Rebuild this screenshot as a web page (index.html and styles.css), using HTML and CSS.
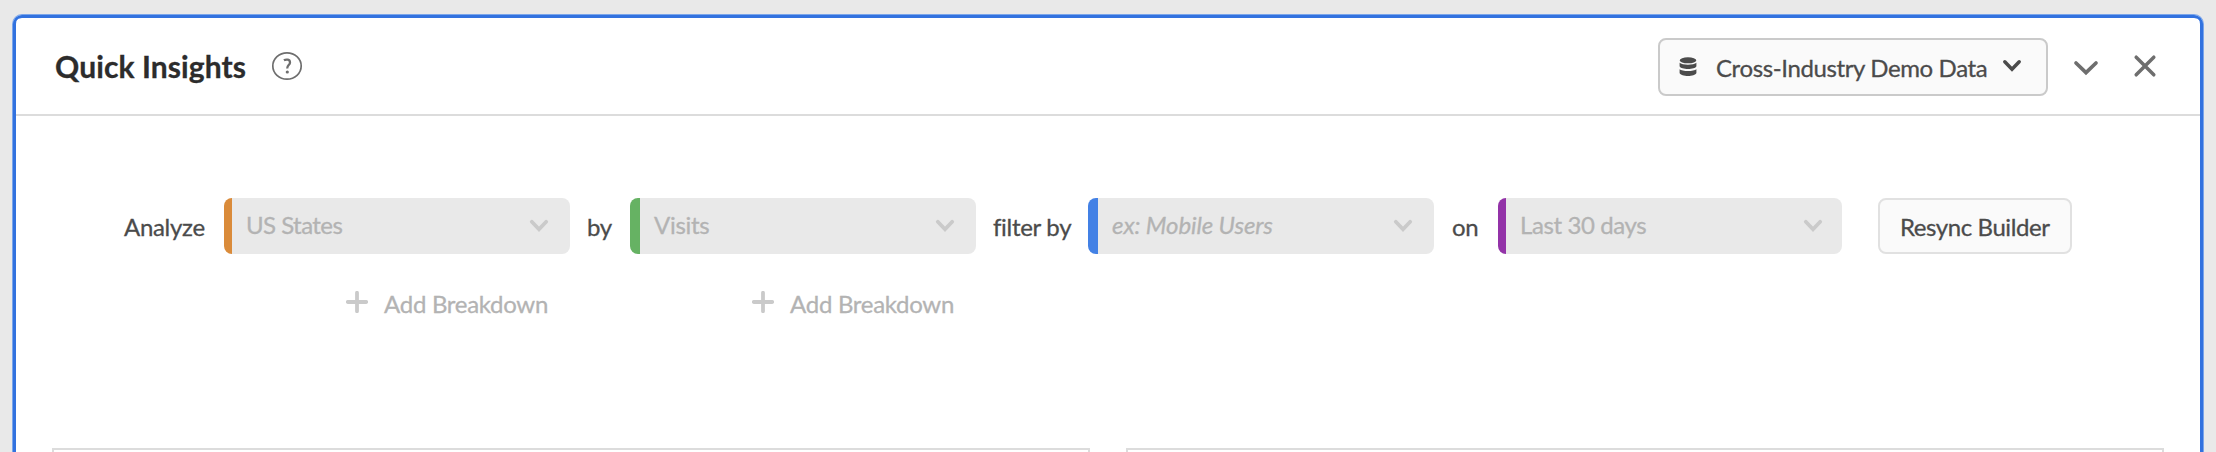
FILE: index.html
```html
<!DOCTYPE html>
<html lang="en">
<head>
<meta charset="utf-8">
<title>Quick Insights</title>
<link rel="stylesheet" href="styles.css">
</head>
<body>
<main class="panel">
  <header class="header">
    <h1 class="title">Quick Insights</h1>
    <svg class="help" width="32" height="30" viewBox="0 0 32 30"><ellipse cx="16" cy="15" rx="14.2" ry="13.2" fill="none" stroke="#6e6e6e" stroke-width="1.7"/><path d="M12.9 9.3C15.3 8 19 8.4 19 11.4C19 14 16.2 14.3 16.2 17.4" fill="none" stroke="#6e6e6e" stroke-width="2.3"/><circle cx="16.3" cy="21" r="1.6" fill="#6e6e6e"/></svg>
    <button class="dataset">
      <svg class="db" width="18" height="20" viewBox="0 0 18 20" fill="#4b4b4b"><ellipse cx="9" cy="3.3" rx="8.3" ry="3"/><path d="M.6 5.7C3 8.3 15 8.3 17.4 5.7V9.2C16 12.8 2 12.8.6 9.2Z"/><path d="M.6 12.3C3 14.7 15 14.7 17.4 12.3V16C16 20 2 20 .6 16Z"/></svg>
      <span class="dataset-name">Cross-Industry Demo Data</span>
      <svg width="20" height="14" viewBox="0 0 20 14"><path d="M2.8 2.8L10 10.2L17.2 2.8" fill="none" stroke="#4b4b4b" stroke-width="3.5" stroke-linecap="round"/></svg>
    </button>
    <svg class="collapse" width="26" height="16" viewBox="0 0 26 16"><path d="M3 3L13 12.6L23 3" fill="none" stroke="#6e6e6e" stroke-width="3.7" stroke-linecap="round"/></svg>
    <svg class="close" width="24" height="24" viewBox="0 0 24 24"><path d="M3.2 3.2L20.8 20.8M20.8 3.2L3.2 20.8" fill="none" stroke="#6e6e6e" stroke-width="3.5" stroke-linecap="round"/></svg>
  </header>
  <section class="builder">
    <span class="label label-analyze">Analyze</span>
    <div class="group">
      <div class="field orange"><span class="value">US States</span><svg class="chevron" width="20" height="14" viewBox="0 0 20 14"><path d="M2.8 2.8L10 10.2L17.2 2.8"/></svg></div>
      <div class="add"><svg width="22" height="22" viewBox="0 0 22 22"><path d="M11 1.8V20.2M1.8 11H20.2"/></svg><span>Add Breakdown</span></div>
    </div>
    <span class="label label-by">by</span>
    <div class="group">
      <div class="field green"><span class="value">Visits</span><svg class="chevron" width="20" height="14" viewBox="0 0 20 14"><path d="M2.8 2.8L10 10.2L17.2 2.8"/></svg></div>
      <div class="add"><svg width="22" height="22" viewBox="0 0 22 22"><path d="M11 1.8V20.2M1.8 11H20.2"/></svg><span>Add Breakdown</span></div>
    </div>
    <span class="label label-filter">filter by</span>
    <div class="field blue"><span class="value placeholder">ex: Mobile Users</span><svg class="chevron" width="20" height="14" viewBox="0 0 20 14"><path d="M2.8 2.8L10 10.2L17.2 2.8"/></svg></div>
    <span class="label label-on">on</span>
    <div class="field purple"><span class="value">Last 30 days</span><svg class="chevron" width="20" height="14" viewBox="0 0 20 14"><path d="M2.8 2.8L10 10.2L17.2 2.8"/></svg></div>
    <button class="resync">Resync Builder</button>
  </section>
  <section class="results">
    <div class="card"></div>
    <div class="card"></div>
  </section>
</main>
</body>
</html>
```
FILE: styles.css
```css
* { box-sizing: border-box; }
body {
  margin: 0;
  height: 452px;
  padding: 14px 12px 0;
  overflow: hidden;
  background: #e9e9e9;
  color: #4b4b4b;
  font: 24px/32px Lato, "Open Sans", sans-serif;
  letter-spacing: -0.3px;
  -webkit-text-stroke: 0.3px;
}
svg { display: block; flex: none; }
button {
  display: flex;
  align-items: center;
  background: #fafafa;
  color: inherit;
  font: inherit;
  letter-spacing: inherit;
  white-space: nowrap;
}
.panel {
  height: 438px;
  overflow: hidden;
  background: #fff;
  border: 1px solid #7aa5ea;
  border-bottom: 0;
  border-radius: 10px 10px 0 0;
  box-shadow: inset 0 3px #3272df, inset 3px 0 #3272df, inset -3px 0 #3272df;
  padding: 3px 3px 0;
}
.header {
  display: flex;
  align-items: center;
  height: 98px;
  padding-left: 39px;
  border-bottom: 2px solid #dcdcdc;
}
.title {
  width: 216px;
  margin: 0;
  color: #2c2c2c;
  font-size: 30px;
  line-height: 36px;
  font-weight: 700;
  letter-spacing: 0.1px;
  white-space: nowrap;
}
.dataset {
  width: 390px;
  height: 58px;
  margin-left: auto;
  padding: 2px 0 0 19px;
  border: 2px solid #cacaca;
  border-radius: 8px;
}
.db { margin: -2px 19px 0 0; }
.dataset-name { width: 286px; letter-spacing: -0.38px; text-align: left; }
.dataset svg:last-child { margin-top: -4px; }
.dataset, .help { position: relative; top: 1px; }
.help { top: 0; }
.collapse { margin: 3px 0 0 25px; }
.close { margin: 0 43px 0 34px; }
.builder {
  display: flex;
  align-items: flex-start;
  height: 332px;
  padding: 82px 0 0 108px;
}
.label { padding-top: 13px; height: 56px; white-space: nowrap; }
.label-analyze { width: 100px; }
.label-by { width: 60px; padding-left: 17px; }
.label-filter { width: 112px; padding-left: 17px; }
.label-on { width: 64px; padding-left: 18px; }
.field {
  display: flex;
  align-items: center;
  justify-content: space-between;
  width: 346px;
  height: 56px;
  padding: 0 21px 2px 14px;
  border-left: 10px solid;
  border-radius: 8px;
  background: #e9e9e9;
}
.orange { border-left-width: 8px; border-left-color: #da8b3a; }
.green { border-left-color: #66b263; }
.blue { border-left-color: #4381e5; }
.purple { width: 344px; padding-right: 19px; border-left-width: 8px; border-left-color: #9333a8; }
.value { color: #b3b3b3; white-space: nowrap; }
.orange .value { letter-spacing: -0.55px; }
.purple .value { letter-spacing: -0.4px; }
.placeholder { font-style: italic; letter-spacing: -0.1px; }
.chevron { fill: none; stroke: #cacaca; stroke-width: 3.8; stroke-linecap: round; margin-top: 2px; }
.add {
  display: flex;
  align-items: center;
  justify-content: flex-end;
  height: 32px;
  margin-top: 34px;
  padding-right: 22px;
  color: #b3b3b3;
  white-space: nowrap;
}
.add svg { margin: -4px 16px 0 0; fill: none; stroke: #cacaca; stroke-width: 3.8; stroke-linecap: round; }
.resync {
  width: 194px;
  height: 56px;
  margin-left: 36px;
  padding: 2px 0 0 20px;
  border: 2px solid #e1e1e1;
  border-radius: 8px;
  letter-spacing: -0.42px;
}
.results { display: flex; gap: 36px; padding: 0 36px; }
.card { flex: 1; height: 4px; border: 2px solid #dcdcdc; border-bottom: 0; }
```
